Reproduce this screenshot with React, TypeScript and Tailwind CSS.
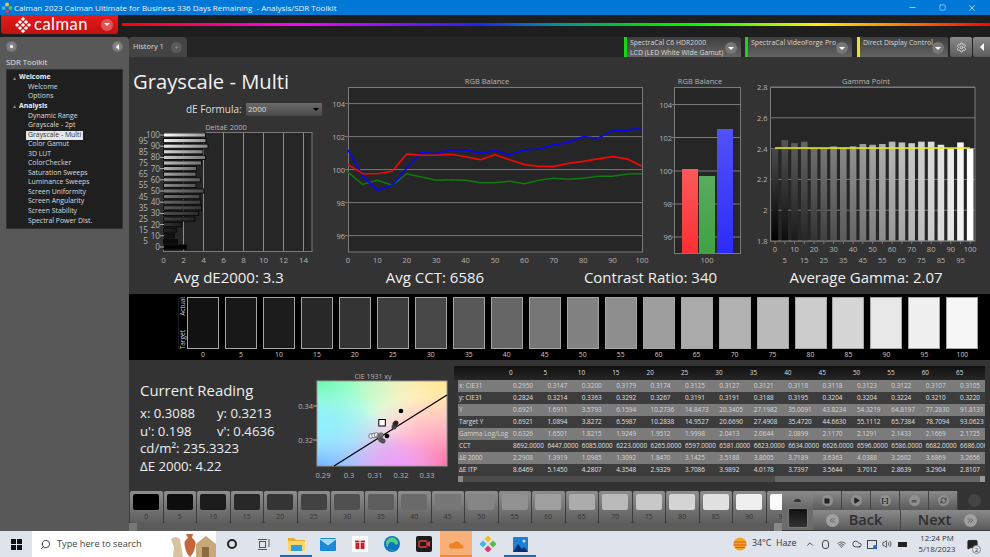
import React from "react";
import { ChevronUp, Volume2, Wifi, Cloud, Search, Minus, X, Settings, Square, Play, RefreshCw, ChevronsLeft, ChevronsRight, MessageSquare } from "lucide-react";

const levels = Array.from({ length: 21 }, (_, i) => i * 5);
const hex = (v: number) => {
  const n = Math.max(0, Math.min(255, Math.round(v)));
  return `rgb(${n},${n},${n})`;
};

const navItems: [string, number][] = [
  ["Welcome", 1], ["Welcome", 2], ["Options", 2], ["Analysis", 1],
  ["Dynamic Range", 2], ["Grayscale - 2pt", 2], ["Grayscale - Multi", 3], ["Color Gamut", 2],
  ["3D LUT", 2], ["ColorChecker", 2], ["Saturation Sweeps", 2], ["Luminance Sweeps", 2],
  ["Screen Uniformity", 2], ["Screen Angularity", 2], ["Screen Stability", 2], ["Spectral Power Dist.", 2],
];

const deltas = [2.29, 1.39, 1.1, 1.31, 1.85, 3.14, 3.52, 3.8, 3.72, 3.64, 4.04, 3.26, 3.69, 3.27, 3.3, 3.8, 4.2, 3.95, 4.45, 4.25, 4.2];
const blue = [101.2, 99.6, 98.75, 99.05, 100.1, 101.05, 100.95, 101.2, 101.2, 101.0, 101.15, 100.9, 101.2, 101.25, 101.5, 101.65, 102.0, 101.9, 102.35, 102.38, 102.55];
const red = [100.3, 99.75, 99.75, 99.9, 100.95, 100.87, 100.87, 100.93, 100.78, 100.6, 100.9, 100.6, 100.3, 100.2, 100.2, 100.38, 100.5, 100.65, 100.78, 100.65, 100.2];
const green = [99.85, 99.1, 99.35, 99.05, 99.75, 99.55, 99.35, 99.38, 99.35, 99.2, 99.2, 99.3, 99.15, 99.35, 99.48, 99.42, 99.47, 99.6, 99.6, 99.73, 99.75];
const gammas = [2.4, 2.455, 2.435, 2.445, 2.4, 2.4, 2.415, 2.405, 2.415, 2.43, 2.425, 2.43, 2.445, 2.44, 2.435, 2.445, 2.445, 2.425, 2.4, 2.44, 2.4];
const bandGray = [18, 24, 28, 40, 52, 62, 72, 88, 102, 118, 130, 142, 158, 170, 178, 186, 204, 214, 232, 240, 246];

const columns = [0, 5, 10, 15, 20, 25, 30, 35, 40, 45, 50, 55, 60, 65];
const tableRows: [string, string[]][] = [
  ["x: CIE31", ["0.2950", "0.3147", "0.3200", "0.3179", "0.3174", "0.3125", "0.3127", "0.3121", "0.3118", "0.3118", "0.3123", "0.3122", "0.3107", "0.3105"]],
  ["y: CIE31", ["0.2824", "0.3214", "0.3363", "0.3292", "0.3267", "0.3191", "0.3191", "0.3188", "0.3195", "0.3204", "0.3204", "0.3224", "0.3210", "0.3220"]],
  ["Y", ["0.6921", "1.6911", "3.5793", "6.1594", "10.2736", "14.8473", "20.3405", "27.1982", "35.0091", "43.8234", "54.3219", "64.8197", "77.2830", "91.8131"]],
  ["Target Y", ["0.6921", "1.0894", "3.8272", "6.5987", "10.2838", "14.9527", "20.6690", "27.4908", "35.4720", "44.6630", "55.1112", "65.7384", "78.7094", "93.0623"]],
  ["Gamma Log/Log", ["0.6326", "1.6501", "1.8215", "1.9249", "1.9512", "1.9998", "2.0413", "2.0644", "2.0899", "2.1170", "2.1291", "2.1433", "2.1669", "2.1725"]],
  ["CCT", ["8692.0000", "6447.0000", "6085.0000", "6223.0000", "6265.0000", "6597.0000", "6581.0000", "6623.0000", "6634.0000", "6626.0000", "6596.0000", "6586.0000", "6682.0000", "6686.0000"]],
  ["ΔE 2000", ["2.2908", "1.3919", "1.0985", "1.3092", "1.8470", "3.1425", "3.5188", "3.8005", "3.7189", "3.6363", "4.0388", "3.2602", "3.6869", "3.2656"]],
  ["ΔE ITP", ["8.6469", "5.1450", "4.2807", "4.3548", "2.9329", "3.7086", "3.9892", "4.0178", "3.7397", "3.5644", "3.7012", "2.8639", "3.2904", "2.8107"]],
];

const LABEL = "#b4b4b4";
const GRID = "#7a7a7a";

function DeltaChart() {
  const x = (v: number) => 163.5 + v * 10;
  const y = (l: number) => 247 - l * 1.12;
  return (
    <svg width={200} height={146} viewBox="129 122 200 146" className="block">
      <defs>
        {levels.map((l) => (
          <linearGradient key={l} id={`d${l}`} x1="0" x2="1" y1="0" y2="0">
            <stop offset="0" stopColor={hex(l * 2.55)} />
            <stop offset="1" stopColor={hex(l * 1.5)} />
          </linearGradient>
        ))}
      </defs>
      <text x={226} y={129.5} fontSize={7.5} fill={LABEL} textAnchor="middle">DeltaE 2000</text>
      <rect x={163.5} y={132.5} width={148.5} height={119} fill="#262626" stroke={GRID} />
      {[2, 4, 6, 8, 10, 12, 14].map((v) => (
        <line key={v} x1={x(v)} x2={x(v)} y1={133} y2={251} stroke="#8c8c8c" />
      ))}
      {levels.map((l, i) => (
        <g key={l}>
          <rect x={163.5} y={y(l) - 2.1} width={deltas[i] * 10} height={4.2} fill={`url(#d${l})`} stroke="#0c0c0c" strokeWidth={1} />
          <line x1={160} x2={164} y1={y(l)} y2={y(l)} stroke={i % 2 === 0 ? LABEL : "none"} />
          <text x={i % 2 === 0 ? 160 : 148} y={y(l) + 3} fontSize={8.2} fill={LABEL} textAnchor="end">{l}</text>
        </g>
      ))}
      {[0, 2, 4, 6, 8, 10, 12, 14].map((v) => (
        <text key={v} x={x(v)} y={263} fontSize={8} fill={LABEL} textAnchor="middle">{v}</text>
      ))}
    </svg>
  );
}

function RgbChart() {
  const x = (i: number) => 348 + i * 14.7;
  const y = (v: number) => 169.6 - (v - 100) * 16.5;
  const pts = (a: number[]) => a.map((v, i) => `${x(i)},${y(v)}`).join(" ");
  return (
    <svg width={331} height={211} viewBox="329 57 331 211" className="block">
      <text x={487} y={84} fontSize={7.5} fill={LABEL} textAnchor="middle">RGB Balance</text>
      <rect x={348.5} y={87.5} width={294} height={164.5} fill="#262626" stroke={GRID} />
      {[104, 102, 100, 98, 96].map((v) => (
        <g key={v}>
          <line x1={345} x2={642} y1={y(v)} y2={y(v)} stroke={GRID} />
          <text x={345} y={y(v) + 3} fontSize={7.5} fill={LABEL} textAnchor="end">{v}</text>
        </g>
      ))}
      {Array.from({ length: 11 }, (_, i) => i * 10).map((v) => (
        <text key={v} x={348 + v * 2.94} y={262.5} fontSize={7.5} fill={LABEL} textAnchor="middle">{v}</text>
      ))}
      <polyline points={pts(green)} fill="none" stroke="#0f7a0f" strokeWidth={1.5} />
      <polyline points={pts(blue)} fill="none" stroke="#0808f0" strokeWidth={1.7} />
      <polyline points={pts(red)} fill="none" stroke="#f00808" strokeWidth={1.7} />
    </svg>
  );
}

function BarChart() {
  return (
    <svg width={90} height={211} viewBox="660 57 90 211" className="block">
      <defs>
        <linearGradient id="br" x1="0" x2="0" y1="0" y2="1"><stop offset="0" stopColor="#fa5a5a" /><stop offset="1" stopColor="#fb2f35" /></linearGradient>
        <linearGradient id="bg" x1="0" x2="0" y1="0" y2="1"><stop offset="0" stopColor="#5aaa5e" /><stop offset="1" stopColor="#3fa244" /></linearGradient>
        <linearGradient id="bb" x1="0" x2="0" y1="0" y2="1"><stop offset="0" stopColor="#5252f6" /><stop offset="1" stopColor="#2c2cf8" /></linearGradient>
      </defs>
      <text x={700} y={84} fontSize={7.5} fill={LABEL} textAnchor="middle">RGB Balance</text>
      <rect x={674.5} y={87.5} width={66} height={166} fill="#262626" stroke={GRID} />
      {[[104, 104.5], [102, 137.5], [100, 171], [98, 204], [96, 237]].map(([v, yy]) => (
        <g key={v}>
          <line x1={672} x2={740} y1={yy} y2={yy} stroke={GRID} />
          <text x={672} y={yy + 3} fontSize={7.5} fill={LABEL} textAnchor="end">{v}</text>
        </g>
      ))}
      <rect x={682} y={169} width={16} height={84} fill="url(#br)" />
      <rect x={699} y={176} width={16} height={77} fill="url(#bg)" />
      <rect x={717} y={129} width={16} height={124} fill="url(#bb)" />
      <text x={707} y={262.5} fontSize={7.5} fill={LABEL} textAnchor="middle">100</text>
    </svg>
  );
}

function GammaChart() {
  const y = (g: number) => 241 - (g - 1.8) * 154;
  return (
    <svg width={240} height={211} viewBox="750 57 240 211" className="block">
      <defs>
        {levels.map((l) => (
          <linearGradient key={l} id={`g${l}`} x1="0" x2="0" y1="0" y2="1">
            <stop offset="0" stopColor={hex(74 + l * 1.81)} />
            <stop offset="1" stopColor={hex(l * 2.55)} />
          </linearGradient>
        ))}
      </defs>
      <text x={866} y={84} fontSize={7.5} fill={LABEL} textAnchor="middle">Gamma Point</text>
      <rect x={770.5} y={87.5} width={204.5} height={153.5} fill="#262626" stroke={GRID} />
      {[2.8, 2.6, 2.4, 2.2, 2].map((g) => (
        <line key={g} x1={770} x2={975} y1={y(g)} y2={y(g)} stroke={GRID} />
      ))}
      {[[2.8, "2.8"], [2.6, "2.6"], [2.4, "2.4"], [2.2, "2.2"], [2, "2"], [1.8, "1.8"]].map(([g, t]) => (
        <text key={t as string} x={767.5} y={(y(g as number) as number) + 3} fontSize={7.5} fill={LABEL} textAnchor="end">{t}</text>
      ))}
      {levels.map((l, i) => (
        <rect key={l} x={771.7 + i * 9.76} y={y(gammas[i])} width={6.6} height={241 - y(gammas[i])} fill={`url(#g${l})`} />
      ))}
      <line x1={775} x2={970} y1={148} y2={148} stroke="#eeee00" strokeWidth={1.5} />
      <line x1={770} x2={975} y1={241} y2={241} stroke={GRID} />
      {levels.map((l, i) => (
        <g key={l}>
          <line x1={775 + i * 9.76} x2={775 + i * 9.76} y1={241} y2={244} stroke={GRID} />
          <text x={775 + i * 9.76} y={i % 2 === 0 ? 252 : 262.5} fontSize={7.5} fill={LABEL} textAnchor="middle">{l}</text>
        </g>
      ))}
    </svg>
  );
}

function CieChart() {
  const R = { x: 317, y: 381, width: 130, height: 85 };
  const spots: [string, string, string, string, string][] = [
    ["c1", "0", "0", "0.8", "#66fcac"],
    ["c2", "1", "0", "0.75", "#ffe58e"],
    ["c3", "1", "1", "0.85", "#ff6f9f"],
    ["c4", "0", "1", "0.75", "#6fb2ff"],
    ["c5", "0.62", "1", "0.4", "#ee9dff"],
    ["c6", "0", "0.5", "0.5", "#8ef2ff"],
  ];
  return (
    <svg width={160} height={128} viewBox="294 360 160 128" className="block">
      <defs>
        {spots.map(([id, cx, cy, r, c]) => (
          <radialGradient key={id} id={id} cx={cx} cy={cy} r={r}>
            <stop offset="0" stopColor={c} />
            <stop offset="1" stopColor={c} stopOpacity="0" />
          </radialGradient>
        ))}
      </defs>
      <text x={373} y={379} fontSize={7} fill={LABEL} textAnchor="middle">CIE 1931 xy</text>
      <rect {...R} fill="#ffffff" />
      {spots.map(([id]) => <rect key={id} {...R} fill={`url(#${id})`} />)}
      <rect {...R} fill="none" stroke="#999" />
      <line x1={334} y1={466} x2={447} y2={395} stroke="#000" strokeWidth={1.3} />
      {[[371, 436], [374, 435.5], [376.5, 435]].map(([a, b], i) => (
        <circle key={i} cx={a} cy={b} r={2.3} fill="#fff" stroke="#333" strokeWidth={0.6} />
      ))}
      {[[379, 436, "#aaa"], [381, 435, "#888"], [380, 438, "#777"], [381, 440, "#666"], [383, 441, "#555"], [394, 427, "#444"], [395, 424, "#333"], [396, 423, "#222"]].map(([a, b, c], i) => (
        <circle key={i} cx={a as number} cy={b as number} r={2.3} fill={c as string} stroke="#333" strokeWidth={0.5} />
      ))}
      <circle cx={401} cy={411} r={2.3} fill="#000" />
      <circle cx={387} cy={436} r={2.3} fill="#000" />
      <rect x={378.8} y={419.5} width={6.5} height={6.5} fill="#fff" stroke="#000" strokeWidth={1} />
      {[[0.29, 323], [0.3, 349], [0.31, 375], [0.32, 401], [0.33, 427]].map(([t, a]) => (
        <text key={t} x={a} y={478} fontSize={7.5} fill={LABEL} textAnchor="middle">{t}</text>
      ))}
      {[[0.34, 406], [0.32, 440]].map(([t, b]) => (
        <g key={t}>
          <line x1={313} x2={317} y1={b} y2={b} stroke={LABEL} />
          <text x={313} y={b + 2.5} fontSize={7.5} fill={LABEL} textAnchor="end">{t.toFixed(2)}</text>
        </g>
      ))}
    </svg>
  );
}

function CalmanMark() {
  return (
    <svg width="16" height="16" viewBox="0 0 16 16">
      <g fill="#fff">
        {[[8, 2], [5, 5], [11, 5], [2, 8], [14, 8], [5, 11], [11, 11], [8, 14], [8, 8]].map(([x, y], i) => (
          <rect key={i} x={x - 1.5} y={y - 1.5} width="3" height="3" transform={`rotate(45 ${x} ${y})`} />
        ))}
      </g>
    </svg>
  );
}

function AppIcon() {
  return (
    <svg width="12" height="12" viewBox="0 0 12 12">
      <circle cx="6" cy="2.6" r="2" fill="#f2c230" />
      <circle cx="2.6" cy="6" r="2" fill="#41b6e6" />
      <circle cx="9.4" cy="6" r="2" fill="#63bb4d" />
      <circle cx="6" cy="9.4" r="2" fill="#e0325a" />
    </svg>
  );
}

function RoundBtn({ children }: { children: React.ReactNode }) {
  return (
    <span className="flex h-[11px] w-[11px] items-center justify-center rounded-full bg-[radial-gradient(circle,#9a9a9a,#5e5e5e)] text-[#eee]">
      {children}
    </span>
  );
}

function Device({ w, lines, color }: { w: string; lines: string[]; color: string }) {
  return (
    <div className={`relative flex h-[20px] items-start overflow-hidden rounded-tr-[3px] bg-[linear-gradient(#3e3e3e,#646464)] ${w}`}>
      <span className={`h-full w-[3px] shrink-0 ${color}`} />
      <div className="pl-[3px] pt-[1px] text-[6.9px] leading-[10px] text-[#d8d8d8] whitespace-nowrap">
        {lines.map((t) => <div key={t}>{t}</div>)}
      </div>
      <span className="absolute right-[4px] top-[5px] flex h-[12px] w-[12px] items-center justify-center rounded-full bg-[#777]">
        <span className="h-0 w-0 border-x-[3px] border-t-[3px] border-x-transparent border-t-white" />
      </span>
    </div>
  );
}

function TaskCell({ children, active }: { children: React.ReactNode; active?: string }) {
  return (
    <div className="relative flex h-full w-[32px] shrink-0 items-center justify-center">
      {children}
      {active && <span className={`absolute bottom-0 left-0 right-0 h-[2px] ${active}`} />}
    </div>
  );
}

function TrayBox({ children, w }: { children: React.ReactNode; w: string }) {
  return <div className={`flex h-full shrink-0 items-center justify-center text-[#333] ${w}`}>{children}</div>;
}

export default function App() {
  return (
    <div className="flex h-[557px] w-[990px] flex-col overflow-hidden bg-[#222] font-['Open_Sans','Noto_Sans',sans-serif] text-white">
      {/* title bar */}
      <div className="flex h-[15px] shrink-0 items-center bg-[#0078d7]">
        <span className="ml-[1px] flex w-[13px]"><AppIcon /></span>
        <span className="text-[8px] leading-none text-[#eaf4ff] whitespace-nowrap">Calman 2023 Calman Ultimate for Business 336 Days Remaining&nbsp; - Analysis/SDR Toolkit</span>
        <div className="ml-auto flex items-center text-[#cfe4f8]">
          <span className="flex w-[30px] justify-center"><Minus size={9} /></span>
          <span className="flex w-[30px] justify-center"><Square size={7} /></span>
          <span className="flex w-[30px] justify-center"><X size={10} /></span>
          <span className="w-[3px]" />
        </div>
      </div>

      {/* app header */}
      <div className="flex h-[22px] shrink-0 items-start bg-[#1e1e1e]">
        <div className="ml-[1px] flex h-[19px] w-[117px] items-center rounded-b-[3px] bg-[linear-gradient(#e61c1c,#c01212)] pl-[14px]">
          <CalmanMark />
          <span className="ml-[3px] font-['Lato',sans-serif] text-[16.5px] leading-none tracking-[0.5px] text-white">calman</span>
          <span className="ml-auto mr-[5px] flex h-[12px] w-[12px] items-center justify-center rounded-full bg-[#e25555]">
            <span className="h-0 w-0 border-x-[3px] border-t-[3px] border-x-transparent border-t-white" />
          </span>
        </div>
        <div className="ml-[4px] mt-[8px] h-[3px] flex-1 bg-[linear-gradient(to_right,#ff0000_0%,#ff00ff_20.5%,#2020ff_41%,#0090a0_50%,#00e000_61%,#00ff00_66.5%,#ffee00_80%,#ff0000_100%)]" />
      </div>

      {/* body */}
      <div className="flex min-h-0 flex-1">
        {/* sidebar */}
        <aside className="flex w-[129px] shrink-0 flex-col rounded-tr-[4px] bg-[#585858]">
          <div className="flex h-[19px] items-center justify-between px-[6px]">
            <RoundBtn><span className="h-[3px] w-[3px] rounded-full bg-white" /></RoundBtn>
            <RoundBtn><span className="h-0 w-0 border-y-[3px] border-r-[3px] border-y-transparent border-r-white" /></RoundBtn>
          </div>
          <div className="h-[13px] pl-[6px] text-[7.8px] leading-[13px] text-[#e0e0e0]">SDR Toolkit</div>
          <nav className="mx-[6px] h-[160px] border border-[#333] bg-[#1f1f1f] pt-[3px]">
            {navItems.map(([t, kind], i) => (
              <div key={i} className="flex h-[9.55px] items-center leading-none whitespace-nowrap">
                {kind === 1 ? (
                  <>
                    <span className="ml-[6px] w-[6px] text-[6px] text-[#888]">▴</span>
                    <span className="text-[6.9px] font-bold text-[#f0f0f0]">{t}</span>
                  </>
                ) : kind === 3 ? (
                  <span className="ml-[19px] bg-[#e6e6e6] px-[2px] py-[1px] text-[6.9px] text-[#333]">{t}</span>
                ) : (
                  <span className="ml-[21px] text-[6.9px] text-[#dcdcdc]">{t}</span>
                )}
              </div>
            ))}
          </nav>
        </aside>

        {/* main */}
        <main className="flex min-w-0 flex-1 flex-col bg-[#333]">
          {/* tab row */}
          <div className="flex h-[20px] shrink-0 items-end bg-[#252525]">
            <div className="flex h-[20px] w-[58px] items-center rounded-t-[4px] bg-[#444] pl-[4px]">
              <span className="text-[7.4px] text-[#ddd]">History 1</span>
              <span className="ml-auto mr-[5px] flex h-[11px] w-[11px] items-center justify-center rounded-full bg-[#5a5a5a] text-[7px] leading-none text-[#999]">+</span>
            </div>
            <div className="ml-auto flex h-[20px] items-start">
              <Device w="w-[117px]" lines={["SpectraCal C6 HDR2000", "LCD (LED White Wide Gamut)"]} color="bg-[#19d419]" />
              <div className="w-[4px]" />
              <Device w="w-[107px]" lines={["SpectraCal VideoForge Pro"]} color="bg-[#19d419]" />
              <div className="w-[5px]" />
              <Device w="w-[91px]" lines={["Direct Display Control"]} color="bg-[#e6e619]" />
              <div className="w-[2px]" />
              <div className="flex h-[20px] w-[22px] items-center justify-center rounded-[2px] bg-[linear-gradient(#8a8a8a,#5c5c5c)] text-[#ddd]"><Settings size={11} /></div>
              <div className="w-[1px]" />
              <div className="flex h-[20px] w-[17px] items-center justify-center rounded-l-[2px] bg-[linear-gradient(#8a8a8a,#5c5c5c)]">
                <span className="h-0 w-0 border-y-[4px] border-r-[4px] border-y-transparent border-r-white" />
              </div>
            </div>
          </div>

          {/* charts */}
          <div className="flex h-[211px] shrink-0">
            <div className="flex w-[200px] shrink-0 flex-col">
              <h1 className="mt-[9px] h-[30px] pl-[4px] text-[20.2px] font-normal leading-[30px] text-[#f2f2f2] whitespace-nowrap">Grayscale - Multi</h1>
              <div className="flex h-[26px] items-center pl-[57px]">
                <span className="w-[55px] text-[10px] whitespace-nowrap text-[#dedede]">dE Formula:</span>
                <div className="ml-[5px] flex h-[13px] w-[76px] items-center justify-between rounded-[1px] bg-[linear-gradient(#6a6a6a,#484848)] pl-[2px] pr-[3px]">
                  <span className="text-[8px] text-[#ddd]">2000</span>
                  <span className="h-0 w-0 border-x-[3px] border-t-[3px] border-x-transparent border-t-black" />
                </div>
              </div>
              <DeltaChart />
            </div>
            <RgbChart />
            <BarChart />
            <GammaChart />
          </div>

          {/* summary */}
          <div className="flex h-[26px] shrink-0 items-start text-center text-[15px] leading-[18px] text-[#f0f0f0]">
            <div className="w-[200px]">Avg dE2000: 3.3</div>
            <div className="w-[212px]">Avg CCT: 6586</div>
            <div className="w-[219px]">Contrast Ratio: 340</div>
            <div className="w-[212px]">Average Gamma: 2.07</div>
          </div>

          {/* actual/target band */}
          <div className="flex h-[66px] shrink-0 bg-black pl-[49px] pt-[3px]">
            <div className="flex h-[52px] w-[9px] flex-col justify-between border-l border-[#1c1c1c] text-[6.5px] leading-[8px] text-[#cfcfcf]">
              <span className="rotate-180 [writing-mode:vertical-rl]">Actual</span>
              <span className="rotate-180 [writing-mode:vertical-rl]">Target</span>
            </div>
            <div className="flex gap-[5.98px]">
              {levels.map((l, i) => (
                <div key={l} className="flex w-[32px] flex-col items-center">
                  <div className="h-[52px] w-full border border-[#a5a5a5]" style={{ backgroundColor: hex(bandGray[i]) }} />
                  <span className="mt-[1px] text-[6.8px] leading-[10px] text-[#ccc]">{l}</span>
                </div>
              ))}
            </div>
          </div>

          {/* readings */}
          <div className="flex h-[128px] shrink-0">
            <div className="w-[165px] shrink-0 pl-[11px] pt-[19px] text-[#eee]">
              <div className="h-[22px] text-[14.9px] leading-[22px] whitespace-nowrap">Current Reading</div>
              <div className="mt-[4px] text-[13.2px] leading-[17.6px] whitespace-nowrap">
                <div className="flex"><span className="w-[77px]">x: 0.3088</span><span>y: 0.3213</span></div>
                <div className="flex"><span className="w-[77px]">u': 0.198</span><span>v': 0.4636</span></div>
                <div>cd/m²: 235.3323</div>
                <div>ΔE 2000: 4.22</div>
              </div>
            </div>
            <CieChart />
            <div className="mt-[6px] h-[116px] w-[536px] shrink-0 overflow-hidden">
              <div className="flex h-[14px] w-[531px] bg-[linear-gradient(#111,#262626)]">
                <span className="h-full w-[4px] bg-black" />
                <div className="flex text-[6.4px] leading-[14px] text-[#ddd]">
                  <span className="w-[55px] shrink-0" />
                  {columns.map((c) => <span key={c} className="w-[34.4px] shrink-0">{c}</span>)}
                </div>
              </div>
              <div className="ml-[4px] w-[527px] overflow-hidden">
                {tableRows.map(([label, vals], i) => (
                  <div key={label} className={`flex h-[12px] items-center text-[6.4px] leading-none whitespace-nowrap ${i % 2 === 0 ? "bg-[#7b7b7b] text-[#d4d4d4]" : "bg-[#3c3c3c] text-[#e0e0e0]"}`}>
                    <span className="w-[55px] shrink-0 pl-[1px]">{label}</span>
                    {vals.map((v, j) => <span key={j} className="w-[34.4px] shrink-0">{v}</span>)}
                  </div>
                ))}
              </div>
              <div className="ml-[4px] flex h-[6px] w-[527px] items-center bg-[#666]">
                <span className="h-full w-[5px] bg-[#888]" />
                <span className="h-full w-[312px] bg-[#4c4c4c]" />
                <span className="ml-auto h-full w-[5px] bg-[#999]" />
              </div>
            </div>
          </div>

          {/* bottom controls */}
          <div className="flex min-h-0 flex-1 flex-col">
            <div className="h-[3px] shrink-0" />
            <div className="flex min-h-0 flex-1">
              <div className="flex w-[653px] shrink-0 flex-col overflow-hidden">
                <div className="flex h-[32px] shrink-0 gap-[1px] overflow-hidden bg-[#3c3c3c] pl-[1px]">
                  {levels.slice(0, 20).map((l) => (
                    <div key={l} className="flex h-full w-[32.5px] shrink-0 flex-col items-center rounded-[2px] bg-[linear-gradient(#8e8e8e,#5e5e5e)] pt-[3px]">
                      <div className="h-[16px] w-[26px] rounded-[2px]" style={{ backgroundColor: hex(l * 2.65) }} />
                      <span className="mt-[3px] text-[6.8px] leading-[8px] text-[#333]">{l}</span>
                    </div>
                  ))}
                </div>
                <div className="flex h-[8px] shrink-0 bg-[#5c5c5c]">
                  <span className="h-full w-[8px] bg-[#777]" />
                  <span className="ml-auto h-full w-[8px] bg-[#888]" />
                </div>
              </div>
              <div className="flex flex-1 flex-col bg-[#3a3a3a]">
                <div className="flex h-[19px]">
                  <div className="flex w-[31px] items-center justify-center bg-[linear-gradient(#8a8a8a,#666)]">
                    <span className="h-[3px] w-[7px] rounded-t-full bg-[#333]" />
                  </div>
                  {[<Square key="s" size={6} fill="#222" stroke="#222" />, <Play key="p" size={7} fill="#222" stroke="#222" />, <span key="h" className="text-[7px] font-bold leading-none text-[#222]">[-]</span>, <span key="l" className="text-[8px] leading-none text-[#222]">∞</span>, <RefreshCw key="r" size={7} stroke="#222" />].map((ic, i) => (
                    <div key={i} className="flex w-[29px] items-center justify-center border-r border-[#444] bg-[linear-gradient(#8a8a8a,#5a5a5a)]">
                      <span className="flex h-[11px] w-[11px] items-center justify-center rounded-full bg-[#8f8f8f]">{ic}</span>
                    </div>
                  ))}
                  <div className="flex flex-1 items-center justify-center bg-[#333]">
                    <span className="h-[13px] w-[13px] rounded-full bg-[#444]" />
                  </div>
                </div>
                <div className="flex h-[20px]">
                  <div className="flex w-[31px] items-start justify-center bg-[#6c6c6c]">
                    <span className="-mt-[2px] h-[20px] w-[20px] rounded-[2px] border border-[#777] bg-[linear-gradient(#111,#333)]" />
                  </div>
                  <div className="relative flex w-[88px] items-center justify-center border-r border-[#444] bg-[linear-gradient(#8a8a8a,#5a5a5a)] pl-[18px]">
                    <span className="absolute left-[13px] flex h-[13px] w-[13px] items-center justify-center rounded-full bg-[#a0a0a0] text-[#444]"><ChevronsLeft size={9} /></span>
                    <span className="text-[14.5px] font-semibold leading-none text-[#2e2e2e]">Back</span>
                  </div>
                  <div className="relative flex flex-1 items-center justify-center bg-[linear-gradient(#8a8a8a,#5a5a5a)] pr-[22px]">
                    <span className="text-[14.5px] font-semibold leading-none text-[#2e2e2e]">Next</span>
                    <span className="absolute right-[13px] flex h-[13px] w-[13px] items-center justify-center rounded-full bg-[#a0a0a0] text-[#444]"><ChevronsRight size={9} /></span>
                  </div>
                </div>
              </div>
            </div>
          </div>
        </main>
      </div>

      {/* taskbar */}
      <footer className="flex h-[26px] shrink-0 items-center bg-[#dfe4ec] text-[#222]">
        <div className="flex h-full w-[32px] items-center justify-center">
          <svg width="11" height="11" viewBox="0 0 11 11" fill="#111">
            <rect x="0" y="0" width="5" height="5" /><rect x="6" y="0" width="5" height="5" /><rect x="0" y="6" width="5" height="5" /><rect x="6" y="6" width="5" height="5" />
          </svg>
        </div>
        <div className="relative flex h-full w-[184px] shrink-0 items-center overflow-hidden bg-white pl-[8px]">
          <Search size={11} className="-scale-x-100 text-[#333]" />
          <span className="ml-[6px] text-[9.2px] text-[#444] whitespace-nowrap">Type here to search</span>
          <svg width="46" height="24" viewBox="0 0 46 24" className="absolute bottom-0 right-0">
            <path d="M1 6q5-4 9 0l1 6 2 12H3l1-10z" fill="#d8c4a0" />
            <path d="M16 1h7l-1 4q5 3 3 9-1 6-5 10-4-4-5-10-2-6 3-9z" fill="#c5653c" />
            <path d="M26 24V11l10-8 10 8v13z" fill="#c9a878" />
            <rect x="32" y="14" width="7" height="10" fill="#8c6a44" />
          </svg>
        </div>
        <TaskCell><span className="h-[10px] w-[10px] rounded-full border-[2px] border-[#222]" /></TaskCell>
        <TaskCell>
          <svg width="12" height="11" viewBox="0 0 12 11" fill="none" stroke="#555"><rect x="1.5" y="2.5" width="6" height="6" /><path d="M0 0.5h9M0 10.5h9M11 0v8" /></svg>
        </TaskCell>
        <TaskCell active="bg-[#0a6cc4]">
          <svg width="17" height="14" viewBox="0 0 17 14"><path d="M0 1h6l2 2h9v2H0z" fill="#e8b030" /><rect y="4" width="17" height="10" rx="1" fill="#f7d768" /><rect x="3" y="8" width="11" height="6" fill="#2f9fe0" /></svg>
        </TaskCell>
        <TaskCell>
          <svg width="16" height="13" viewBox="0 0 16 13"><rect width="16" height="13" rx="1" fill="#1a8ad8" /><path d="M0 1l8 6 8-6" fill="#9fd8ff" stroke="#fff" strokeWidth="0.6" /></svg>
        </TaskCell>
        <TaskCell>
          <svg width="16" height="16" viewBox="0 0 16 16"><rect width="16" height="16" fill="#fff" /><rect x="3.5" y="7" width="9" height="6" fill="#c8202a" /><rect x="3" y="4.5" width="10" height="2" fill="#c8202a" /><rect x="7.4" y="3" width="1.2" height="10" fill="#fff" /></svg>
        </TaskCell>
        <TaskCell>
          <svg width="16" height="16" viewBox="0 0 16 16"><circle cx="8" cy="8" r="8" fill="#1173c6" /><path d="M2 8a6 6 0 0 1 12-1c0 2-3 2-3 1-1-3-7-3-7 2 0 3 3 6 8 4a8 8 0 0 1-10-6z" fill="#4fd27a" /></svg>
        </TaskCell>
        <TaskCell>
          <svg width="16" height="16" viewBox="0 0 16 16"><rect width="16" height="16" rx="2" fill="#1c1c1c" /><rect x="3" y="5" width="8" height="6" rx="1" fill="none" stroke="#e63a3a" strokeWidth="1.3" /><path d="M11 7l3-2v6l-3-2z" fill="#e63a3a" /></svg>
        </TaskCell>
        <div className="relative flex h-full w-[32px] shrink-0 items-center justify-center bg-[#f7b078]">
          <svg width="16" height="9" viewBox="0 0 16 9"><path d="M2 8.5h13a2.5 2.5 0 0 0-2-4A4.5 4.5 0 0 0 5 3.5 3 3 0 0 0 2 8.5z" fill="#f08020" /></svg>
          <span className="absolute bottom-0 left-0 right-0 h-[2px] bg-[#f08a2c]" />
        </div>
        <TaskCell>
          <svg width="16" height="16" viewBox="0 0 16 16">
            <rect x="5.5" y="0.5" width="5" height="5" transform="rotate(45 8 3)" fill="#f0c020" />
            <rect x="0.5" y="5.5" width="5" height="5" transform="rotate(45 3 8)" fill="#38b6e8" />
            <rect x="10.5" y="5.5" width="5" height="5" transform="rotate(45 13 8)" fill="#58b848" />
            <rect x="5.5" y="10.5" width="5" height="5" transform="rotate(45 8 13)" fill="#e03868" />
          </svg>
        </TaskCell>
        <TaskCell active="bg-[#0a6cc4]">
          <svg width="15" height="15" viewBox="0 0 15 15"><rect width="15" height="15" rx="1" fill="#1d7fd0" /><path d="M0 15L5 7l4 5 2-2 4 5z" fill="#0a2f78" /><circle cx="11" cy="4" r="1.5" fill="#bfe3ff" /></svg>
        </TaskCell>
        <div className="min-w-0 flex-1" />
        <TrayBox w="w-[18px]">
          <svg width="14" height="14" viewBox="0 0 14 14"><circle cx="7" cy="7" r="6.5" fill="#f5a623" /><path d="M1 5h12M0.5 8h13M2 10.5h10" stroke="#d9541e" strokeWidth="1.2" /></svg>
        </TrayBox>
        <span className="ml-[3px] w-[50px] text-[8.8px] text-[#333] whitespace-nowrap">34°C&nbsp; Haze</span>
        <TrayBox w="w-[16px]"><ChevronUp size={10} /></TrayBox>
        <TrayBox w="w-[15px]"><span className="h-[9px] w-[7px] rounded-[3px] border border-[#444]" /></TrayBox>
        <TrayBox w="w-[16px]"><Wifi size={9} /></TrayBox>
        <TrayBox w="w-[15px]"><Cloud size={10} /></TrayBox>
        <TrayBox w="w-[16px]"><span className="relative h-[9px] w-[10px] border border-[#444]"><span className="absolute -bottom-[1px] -right-[1px] h-[4px] w-[4px] rounded-full bg-[#1a73d8]" /></span></TrayBox>
        <TrayBox w="w-[14px]"><Volume2 size={10} /></TrayBox>
        <TrayBox w="w-[16px]"><span className="h-[5px] w-[9px] bg-[#222]" /></TrayBox>
        <div className="ml-[5px] w-[44px] text-center text-[7.8px] leading-[11px] text-[#333]">
          <div>12:24 PM</div>
          <div>5/18/2023</div>
        </div>
        <div className="relative ml-[7px] mr-[12px] flex h-full w-[12px] items-center justify-center">
          <MessageSquare size={11} fill="#222" stroke="#222" />
          <span className="absolute bottom-[3px] -right-[3px] flex h-[9px] w-[9px] items-center justify-center rounded-full border border-[#888] bg-[#dfe4ec] text-[6px] leading-none text-[#222]">2</span>
        </div>
      </footer>
    </div>
  );
}
